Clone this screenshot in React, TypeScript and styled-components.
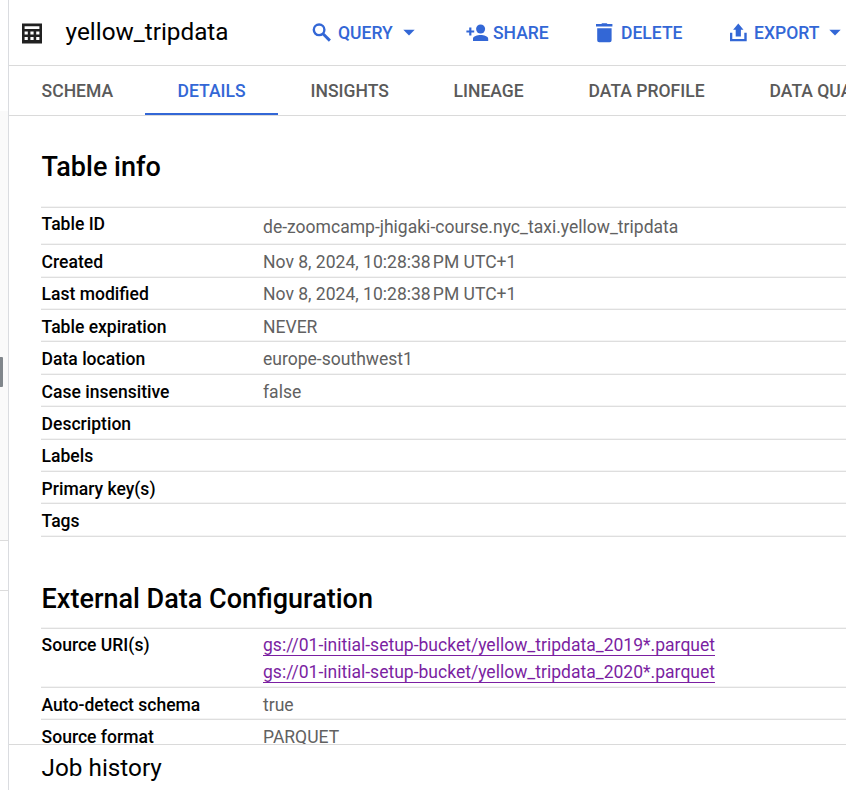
import React from "react";
import styled, { createGlobalStyle } from "styled-components";

const GlobalStyle = createGlobalStyle`
  * { box-sizing: border-box; }
  body { margin: 0; background: #fff; font-family: Roboto, "Noto Sans", sans-serif; overflow: hidden; }
`;

const Shell = styled.div`
  display: flex;
  width: 846px;
  height: 790px;
  overflow: hidden;
`;

const Rail = styled.aside`
  width: 8px;
  flex: none;
  display: flex;
  flex-direction: column;
`;
const RailBlock = styled.div<{ $h: number; $tint?: boolean; $line?: boolean }>`
  height: ${(p) => p.$h}px;
  background: ${(p) => (p.$tint ? "#fafafa" : "#fff")};
  border-bottom: ${(p) => (p.$line ? "1px solid #dcdcdc" : "none")};
`;
const Handle = styled.div`
  width: 3px;
  height: 30px;
  margin-top: 246px;
  background: #80868b;
  border-radius: 0 1px 1px 0;
`;

const Panel = styled.main`
  flex: 1;
  min-width: 0;
  border-left: 1px solid #dadce0;
  display: flex;
  flex-direction: column;
  overflow: hidden;
`;

const Toolbar = styled.header`
  height: 66px;
  flex: none;
  border-bottom: 1px solid #dadada;
  display: flex;
  align-items: center;
  padding-left: 10px;
`;
const Title = styled.h1`
  margin: 0 0 2px 20.6px;
  width: 244.4px;
  flex: none;
  font-size: 24.3px;
  font-weight: 400;
  line-height: 32px;
  color: #000;
  white-space: nowrap;
`;
const Action = styled.button<{ $w: number }>`
  width: ${(p) => p.$w}px;
  flex: none;
  display: flex;
  align-items: center;
  gap: 4px;
  padding: 0;
  border: 0;
  background: none;
  color: #3367d6;
  font: 500 17.55px/26px Roboto, sans-serif;
  white-space: nowrap;
`;
const Icon = styled.svg`
  width: 24px;
  height: 24px;
  flex: none;
  fill: currentColor;
`;
const TableIcon = styled(Icon)`
  color: #212121;
  width: 26px;
  height: 26px;
`;

const Tabs = styled.nav`
  height: 50px;
  flex: none;
  display: flex;
  border-bottom: 1px solid #dadada;
`;
const Tab = styled.a<{ $w: number; $active?: boolean }>`
  width: ${(p) => p.$w}px;
  height: 49px;
  flex: none;
  padding-left: 32.6px;
  font-size: 17.55px;
  font-weight: 500;
  line-height: 50px;
  white-space: nowrap;
  color: ${(p) => (p.$active ? "#3367d6" : "#5a5a5a")};
  box-shadow: ${(p) => (p.$active ? "inset 0 -2px #3367d6" : "none")};
`;

const Content = styled.section`
  flex: 1;
  min-height: 0;
  overflow: hidden;
  padding-left: 32px;
`;
const Heading = styled.h2<{ $top: number; $h: number }>`
  margin: 0;
  padding: ${(p) => p.$top}px 0 0 0.6px;
  height: ${(p) => p.$h}px;
  font-size: 27px;
  font-weight: 500;
  line-height: 32px;
  color: #000;
`;
const Table = styled.dl`
  margin: 0;
  border-top: 1px solid #dedede;
  box-shadow: 0 -1px #f4f4f4;
`;
const Row = styled.div<{ $h: number }>`
  height: ${(p) => p.$h}px;
  display: grid;
  grid-template-columns: 222px 1fr;
  border-bottom: 1px solid #dedede;
  box-shadow: inset 0 -1px #f4f4f4;
  font-size: 17.55px;
  line-height: 27px;
`;
const Label = styled.dt<{ $top: number }>`
  font-weight: 500;
  color: #000;
  padding: ${(p) => p.$top}px 0 0 0.6px;
`;
const Value = styled.dd<{ $top: number }>`
  margin: 0;
  color: #616161;
  padding-top: ${(p) => p.$top}px;
  white-space: nowrap;
`;
const UriLink = styled.a`
  display: block;
  width: fit-content;
  color: #7b1fa2;
  height: 24px;
  margin-bottom: 3px;
  border-bottom: 1px solid #7b1fa2;
`;
const Footer = styled.footer`
  height: 46px;
  flex: none;
  border-top: 1px solid #dadada;
  padding-left: 32.6px;
  font-size: 24.3px;
  line-height: 46px;
  color: #000;
`;

const Caret = () => (
  <Icon viewBox="0 0 24 24">
    <path d="M6.3 8.7h11.4L12 14.4z" />
  </Icon>
);

type Item = { label: string; value?: string; h: number; top?: number; valueTop?: number };

const info: Item[] = [
  { label: "Table ID", value: "de-zoomcamp-jhigaki-course.nyc_taxi.yellow_tripdata", h: 37, top: 3, valueTop: 6 },
  { label: "Created", value: "Nov 8, 2024, 10:28:38\u202fPM UTC+1", h: 33 },
  { label: "Last modified", value: "Nov 8, 2024, 10:28:38\u202fPM UTC+1", h: 32, top: 3 },
  { label: "Table expiration", value: "NEVER", h: 32 },
  { label: "Data location", value: "europe-southwest1", h: 33 },
  { label: "Case insensitive", value: "false", h: 32 },
  { label: "Description", h: 33 },
  { label: "Labels", h: 32, top: 3 },
  { label: "Primary key(s)", h: 32 },
  { label: "Tags", h: 33 },
];
const tail: Item[] = [
  { label: "Auto-detect schema", value: "true", h: 32 },
  { label: "Source format", value: "PARQUET", h: 33 },
];
const uris = [
  "gs://01-initial-setup-bucket/yellow_tripdata_2019*.parquet",
  "gs://01-initial-setup-bucket/yellow_tripdata_2020*.parquet",
];

const InfoRow = ({ label, value, h, top = 4, valueTop }: Item) => (
  <Row $h={h}>
    <Label $top={top}>{label}</Label>
    <Value $top={valueTop ?? top}>{value}</Value>
  </Row>
);

export default function App() {
  return (
    <Shell>
      <GlobalStyle />
      <Rail>
        <RailBlock $h={111} />
        <RailBlock $h={430} $tint $line>
          <Handle />
        </RailBlock>
        <RailBlock $h={50} $line />
      </Rail>
      <Panel>
        <Toolbar>
          <TableIcon viewBox="0 0 26 26">
            <path
              fillRule="evenodd"
              d="M3 3.5h20v20H3zM5.6 6.2v2.7h14.8V6.2zM5.6 11.4v3h3.2v-3zm5.8 0v3h3.2v-3zm5.8 0v3h3.2v-3zM5.6 17v3h3.2v-3zm5.8 0v3h3.2v-3zm5.8 0v3h3.2v-3z"
            />
          </TableIcon>
          <Title>yellow_tripdata</Title>
          <Action $w={155}>
            <Icon viewBox="0 0 24 24">
              <g fill="none" stroke="currentColor">
                <circle cx="9.1" cy="8.8" r="5.3" strokeWidth="2.4" />
                <path d="M13 12.7l6.9 6.9" strokeWidth="2.9" />
              </g>
            </Icon>
            QUERY
            <Caret />
          </Action>
          <Action $w={128}>
            <Icon viewBox="0 0 24 24">
              <circle cx="15.6" cy="8" r="4.5" />
              <path d="M4.2 6.6h2.2v2.8h2.8v2.2H6.4v2.8H4.2v-2.8H1.4V9.4h2.8zM8 20v-2.2c0-2.4 4.4-3.7 7.6-3.7s7.6 1.3 7.6 3.7V20z" />
            </Icon>
            SHARE
          </Action>
          <Action $w={133}>
            <Icon viewBox="0 0 24 24">
              <path d="M3 3.1h5.3l.8-.8h4.6l.8.8h4.9v2.5H3zM4.2 7.2h14.4v12a2 2 0 0 1-2 2H6.2a2 2 0 0 1-2-2z" />
            </Icon>
            DELETE
          </Action>
          <Action $w={130}>
            <Icon viewBox="0 0 24 24">
              <path d="M12.3 2.4l5.2 6.4h-2.6v6.8H9.7V8.8H7.1zM4 11.8h2.3V18h12v-6.2h2.4v8.5H4z" />
            </Icon>
            EXPORT
            <Caret />
          </Action>
        </Toolbar>
        <Tabs>
          <Tab $w={136}>SCHEMA</Tab>
          <Tab $w={133} $active>DETAILS</Tab>
          <Tab $w={143}>INSIGHTS</Tab>
          <Tab $w={135}>LINEAGE</Tab>
          <Tab $w={181}>DATA PROFILE</Tab>
          <Tab $w={180}>DATA QUALITY</Tab>
        </Tabs>
        <Content>
          <Heading $top={35} $h={91}>Table info</Heading>
          <Table>
            {info.map((r) => (
              <InfoRow key={r.label} {...r} />
            ))}
          </Table>
          <Heading $top={46} $h={91}>External Data Configuration</Heading>
          <Table>
            <Row $h={59}>
              <Label $top={3}>Source URI(s)</Label>
              <Value $top={3}>
                {uris.map((u) => (
                  <UriLink key={u}>{u}</UriLink>
                ))}
              </Value>
            </Row>
            {tail.map((r) => (
              <InfoRow key={r.label} {...r} />
            ))}
          </Table>
        </Content>
        <Footer>Job history</Footer>
      </Panel>
    </Shell>
  );
}
